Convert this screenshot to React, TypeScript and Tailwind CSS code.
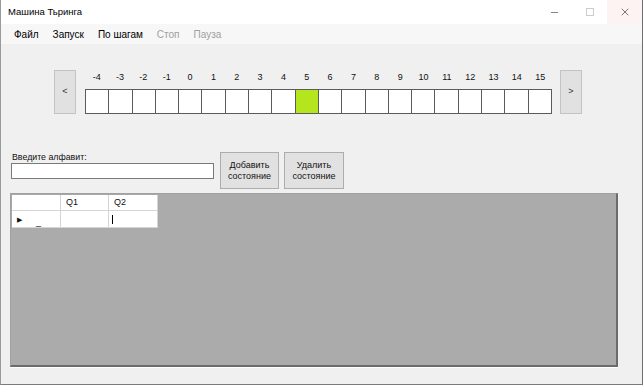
import { Minus, X } from "lucide-react"

const cells = Array.from({ length: 20 }, (_, i) => i - 4)
const activeCell = 5

const menu = [
  { label: "Файл", enabled: true },
  { label: "Запуск", enabled: true },
  { label: "По шагам", enabled: true },
  { label: "Стоп", enabled: false },
  { label: "Пауза", enabled: false },
]

function TapeButton({ children }: { children: React.ReactNode }) {
  return (
    <div className="w-[22px] h-[44px] bg-[#e1e1e1] border border-[#c3c3c3] flex items-center justify-center text-[9px] text-[#333] shrink-0">
      {children}
    </div>
  )
}

export default function App() {
  return (
    <div className="w-[643px] h-[385px] bg-[#f0f0f0] flex flex-col border-l border-b border-r border-l-[#9a9a9a] border-b-[#7a7a7a] border-r-[#6e6e6e] font-['Liberation_Sans',Arial,sans-serif] text-black overflow-hidden">
      {/* title bar */}
      <div className="h-[24px] bg-white flex items-center shrink-0">
        <span className="pl-[7px] text-[9.5px] leading-none">Машина Тьринга</span>
        <div className="ml-auto flex h-full">
          <div className="w-[35px] flex items-center justify-center">
            <Minus size={11} strokeWidth={1.2} className="text-[#222]" />
          </div>
          <div className="w-[35px] flex items-center justify-center">
            <div className="w-[8px] h-[8px] border border-[#cccccc]" />
          </div>
          <div className="w-[35px] bg-[#fdf3f3] flex items-center justify-center">
            <X size={12} strokeWidth={1.2} className="text-[#222]" />
          </div>
        </div>
      </div>

      {/* menu */}
      <div className="h-[20px] bg-[#f7f7f7] flex items-center pl-[13px] gap-[14px] text-[10px] shrink-0">
        {menu.map((m) => (
          <span
            key={m.label}
            className={m.enabled ? "text-black font-medium" : "text-[#a0a0a0]"}
          >
            {m.label}
          </span>
        ))}
      </div>

      {/* tape */}
      <div className="flex items-start mt-[26px] pl-[53px]">
        <TapeButton>&lt;</TapeButton>
        <div className="ml-[9px] w-[467px] flex flex-col">
          <div className="h-[19px] flex">
            {cells.map((n) => (
              <div key={n} className="flex-1 text-center text-[9px] leading-[14px] text-[#111]">
                {n}
              </div>
            ))}
          </div>
          <div className="h-[25px] flex border-l border-t border-b border-[#5b5b5b]">
            {cells.map((n) => (
              <div
                key={n}
                className={
                  "flex-1 border-r border-[#5b5b5b] " +
                  (n === activeCell ? "bg-[#b5e61d]" : "bg-white")
                }
              />
            ))}
          </div>
        </div>
        <div className="ml-[8px]">
          <TapeButton>&gt;</TapeButton>
        </div>
      </div>

      {/* alphabet + state buttons */}
      <div className="flex items-start mt-[38px] pl-[10px]">
        <div className="flex flex-col">
          <span className="pl-[1px] text-[8.8px] leading-[11px] h-[11px] text-[#111]">Введите алфавит:</span>
          <div className="w-[203px] h-[16px] bg-white border border-[#7a7a7a]" />
        </div>
        <div className="ml-[6px] w-[59px] h-[37px] bg-[#e1e1e1] border border-[#adadad] flex items-center justify-center text-center text-[9px] leading-[11px] text-[#111]">
          Добавить
          <br />
          состояние
        </div>
        <div className="ml-[5px] w-[60px] h-[37px] bg-[#e1e1e1] border border-[#adadad] flex items-center justify-center text-center text-[9px] leading-[11px] text-[#111]">
          Удалить
          <br />
          состояние
        </div>
      </div>

      {/* data grid */}
      <div className="mt-[4px] ml-[9px] w-[608px] h-[174px] bg-[#ababab] border border-[#a0a0a0] border-r-2 border-b-2 border-r-[#6b6b6b] border-b-[#6b6b6b] shadow-[0_1px_0_#ffffff]">
        <div className="flex flex-col w-fit border-t border-l border-[#a8a8a8] text-[9px] text-[#111]">
          <div className="flex h-[16px]">
            <div className="w-[49px] bg-white border-r border-b border-[#d5d5d5]" />
            <div className="w-[48px] bg-white border-r border-b border-[#d5d5d5] pl-[5px] leading-[15px]">Q1</div>
            <div className="w-[49px] bg-white border-r border-b border-[#d5d5d5] pl-[5px] leading-[15px]">Q2</div>
          </div>
          <div className="flex h-[17px]">
            <div className="w-[49px] bg-white border-r border-b border-[#d5d5d5] flex items-center pl-[5px] relative">
              <span className="text-[7px] leading-none">▶</span>
              <span className="ml-[14px] mt-[6px] leading-none">_</span>
            </div>
            <div className="w-[48px] bg-white border-r border-b border-[#d5d5d5]" />
            <div className="w-[49px] bg-white border-r border-b border-[#d5d5d5] flex items-center pl-[3px]">
              <div className="w-px h-[9px] bg-black" />
            </div>
          </div>
        </div>
      </div>
    </div>
  )
}
